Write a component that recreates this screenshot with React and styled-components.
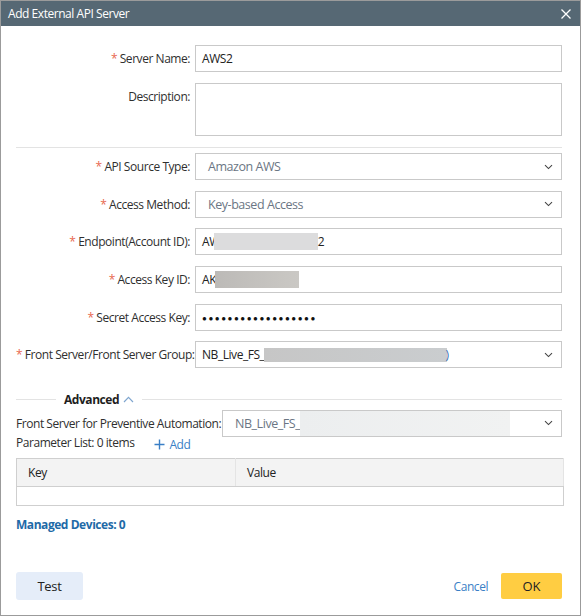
import React from 'react';
import styled, { createGlobalStyle } from 'styled-components';

const GlobalStyle = createGlobalStyle`
  html, body {
    margin: 0;
    padding: 0;
    background: #fff;
  }
  * {
    box-sizing: border-box;
  }
`;

const Chevron = () => (
  <svg width="9" height="6" viewBox="0 0 9 6">
    <path d="M1 1.2l3.5 3.4L8 1.2" fill="none" stroke="#444" strokeWidth="1.1" />
  </svg>
);

const App = () => {
  return (
    <>
      <GlobalStyle />
      <Dialog>
        <Header>
          <HeaderTitle>Add External API Server</HeaderTitle>
          <CloseButton aria-label="close">
            <svg width="10" height="10" viewBox="0 0 10 10">
              <path d="M0.5 0.5l9 9M9.5 0.5l-9 9" stroke="#fff" strokeWidth="1.3" />
            </svg>
          </CloseButton>
        </Header>

        <Body>
          <Row>
            <Label required>Server Name:</Label>
            <Input>AWS2</Input>
          </Row>
          <Row top>
            <Label top>Description:</Label>
            <TextArea />
          </Row>

          <Divider />

          <Row>
            <Label required>API Source Type:</Label>
            <Select muted>
              <span>Amazon AWS</span>
              <Chevron />
            </Select>
          </Row>
          <Row>
            <Label required>Access Method:</Label>
            <Select muted>
              <span>Key-based Access</span>
              <Chevron />
            </Select>
          </Row>
          <Row>
            <Label required>Endpoint(Account ID):</Label>
            <Input>
              AW<Redact w={104} h={17} shift={-6} tone="#dcdcdd" />2
            </Input>
          </Row>
          <Row>
            <Label required>Access Key ID:</Label>
            <Input>
              AK<Redact w={84} h={17} shift={-1} tone="linear-gradient(90deg,#bcbab7,#cac8c4)" />
            </Input>
          </Row>
          <Row>
            <Label required>Secret Access Key:</Label>
            <Input>
              <Dots>●●●●●●●●●●●●●●●●●●</Dots>
            </Input>
          </Row>
          <Row>
            <Label required>Front Server/Front Server Group:</Label>
            <Select>
              <Value>
                NB_Live_FS_<Redact w={183} h={14} tone="linear-gradient(90deg,#c6c6c6,#cacdcf)" />
                <Paren>)</Paren>
              </Value>
              <Chevron />
            </Select>
          </Row>

          <Advanced>
            <Line small />
            <AdvancedTitle>Advanced</AdvancedTitle>
            <svg width="11" height="7" viewBox="0 0 11 7">
              <path d="M1 6l4.5-4.6L10 6" fill="none" stroke="#7fa6cf" strokeWidth="1.2" />
            </svg>
            <Line />
          </Advanced>

          <PreventiveRow>
            <PreventiveLabel>Front Server for Preventive Automation:</PreventiveLabel>
            <Select muted wide>
              <Value>
                NB_Live_FS_<Redact w={210} h={25} tone="linear-gradient(90deg,#eceeef,#f1f2f2)" />
              </Value>
              <Chevron />
            </Select>
          </PreventiveRow>

          <ParamRow>
            <PlainLabel>Parameter List: 0 items</PlainLabel>
            <AddLink>
              <svg width="11" height="11" viewBox="0 0 11 11">
                <path d="M5.5 0.5v10M0.5 5.5h10" stroke="#3a7fc6" strokeWidth="1.4" />
              </svg>
              Add
            </AddLink>
          </ParamRow>

          <Table>
            <thead>
              <tr>
                <Th style={{ width: 219 }}>Key</Th>
                <Th>Value</Th>
              </tr>
            </thead>
            <tbody>
              <tr>
                <Td colSpan={2} />
              </tr>
            </tbody>
          </Table>

          <Managed>Managed Devices: 0</Managed>
        </Body>

        <Footer>
          <TestButton>Test</TestButton>
          <Actions>
            <CancelLink>Cancel</CancelLink>
            <OkButton>OK</OkButton>
          </Actions>
        </Footer>
      </Dialog>
    </>
  );
};

const Dialog = styled.div`
  width: 581px;
  height: 616px;
  display: flex;
  flex-direction: column;
  border: 1px solid #9b9b9b;
  font-family: "Open Sans", "Noto Sans", sans-serif;
  font-size: 12px;
  letter-spacing: -0.45px;
  color: #333;
  background: #fff;
`;

const Header = styled.div`
  height: 25px;
  flex-shrink: 0;
  display: flex;
  align-items: center;
  justify-content: space-between;
  background: #566874;
  padding: 0 9px 0 7px;
`;

const HeaderTitle = styled.div`
  color: #fff;
  font-size: 12px;
`;

const CloseButton = styled.button`
  border: 0;
  padding: 0;
  background: none;
  display: flex;
  cursor: pointer;
`;

const Body = styled.div`
  padding: 19px 18px 0 15px;
  display: flex;
  flex-direction: column;
`;

const Row = styled.div`
  display: grid;
  grid-template-columns: 174px 1fr;
  column-gap: 5px;
  align-items: ${(p) => (p.top ? 'start' : 'center')};
  margin-bottom: 10.6px;
`;

const Label = styled.div`
  text-align: right;
  white-space: nowrap;
  color: #2f2f2f;
  padding-top: ${(p) => (p.top ? '5px' : '0')};

  &::before {
    content: ${(p) => (p.required ? '"* "' : '""')};
    color: #e8674f;
  }
`;

const PlainLabel = styled.div`
  white-space: nowrap;
  color: #2f2f2f;
`;

const PreventiveLabel = styled(PlainLabel)`
  width: 206px;
  flex-shrink: 0;
`;

const Input = styled.div`
  height: 27px;
  border: 1px solid #c9c9c9;
  display: flex;
  align-items: center;
  padding: 0 6px;
  color: #222;
`;

const TextArea = styled.div`
  height: 53px;
  border: 1px solid #c9c9c9;
`;

const Dots = styled.span`
  font-size: 8px;
  letter-spacing: 1.55px;
  color: #111;
`;

const Redact = styled.span`
  display: inline-block;
  width: ${(p) => p.w}px;
  height: ${(p) => p.h}px;
  margin-left: ${(p) => p.shift || 0}px;
  background: ${(p) => p.tone};
`;

const Paren = styled.span`
  color: #3a6fb0;
  margin-left: -2px;
`;

const Select = styled.div`
  height: 27px;
  border: 1px solid #c9c9c9;
  display: flex;
  align-items: center;
  justify-content: space-between;
  padding: 0 8px 0 ${(p) => (p.muted ? '12px' : '6px')};
  color: ${(p) => (p.muted ? '#6b7684' : '#222')};
  font-size: ${(p) => (p.muted ? '12.5px' : '12px')};
  flex: ${(p) => (p.wide ? '1' : 'initial')};
`;

const Value = styled.span`
  display: flex;
  align-items: center;
`;

const Divider = styled.div`
  height: 1px;
  background: #e3e3e3;
  margin: 1px 0 5px;
`;

const Advanced = styled.div`
  display: flex;
  align-items: center;
  gap: 4px;
  margin: 12px 0 2px;
`;

const Line = styled.div`
  height: 1px;
  background: #e3e3e3;
  flex: ${(p) => (p.small ? '0 0 40px' : '1')};
  margin: ${(p) => (p.small ? '0 4px 0 0' : '0 0 0 4px')};
`;

const AdvancedTitle = styled.div`
  font-weight: 700;
  color: #1e1e1e;
`;

const PreventiveRow = styled.div`
  display: flex;
  align-items: center;
`;

const ParamRow = styled.div`
  display: flex;
  align-items: center;
  gap: 20px;
  margin: -4px 0 5px;
`;

const AddLink = styled.div`
  display: flex;
  align-items: center;
  gap: 4px;
  color: #3a7fc6;
  margin-top: 3px;
`;

const Table = styled.table`
  width: 548px;
  border-collapse: collapse;
  border: 1px solid #cfcfcf;
`;

const Th = styled.th`
  height: 28px;
  background: #f3f3f3;
  border-bottom: 1px solid #cfcfcf;
  border-right: 1px solid #e4e4e4;
  text-align: left;
  font-weight: 400;
  padding: 0 11px;
  color: #222;
`;

const Td = styled.td`
  height: 19px;
`;

const Managed = styled.div`
  margin-top: 10px;
  font-weight: 700;
  color: #1e6aa7;
`;

const Footer = styled.div`
  margin-top: auto;
  display: flex;
  align-items: flex-end;
  justify-content: space-between;
  padding: 0 18px 15px 15px;
`;

const TestButton = styled.button`
  width: 67px;
  height: 28px;
  border: 0;
  border-radius: 3px;
  background: #e5edf9;
  font-family: inherit;
  font-size: 13px;
  letter-spacing: -0.3px;
  color: #222;
`;

const Actions = styled.div`
  display: flex;
  align-items: center;
  gap: 13px;
`;

const CancelLink = styled.div`
  color: #3a7fc6;
`;

const OkButton = styled.button`
  width: 61px;
  height: 26px;
  border: 0;
  border-radius: 2px;
  background: #ffcd42;
  font-family: inherit;
  font-size: 13px;
  color: #222;
  margin-bottom: 1px;
`;

export default App;
